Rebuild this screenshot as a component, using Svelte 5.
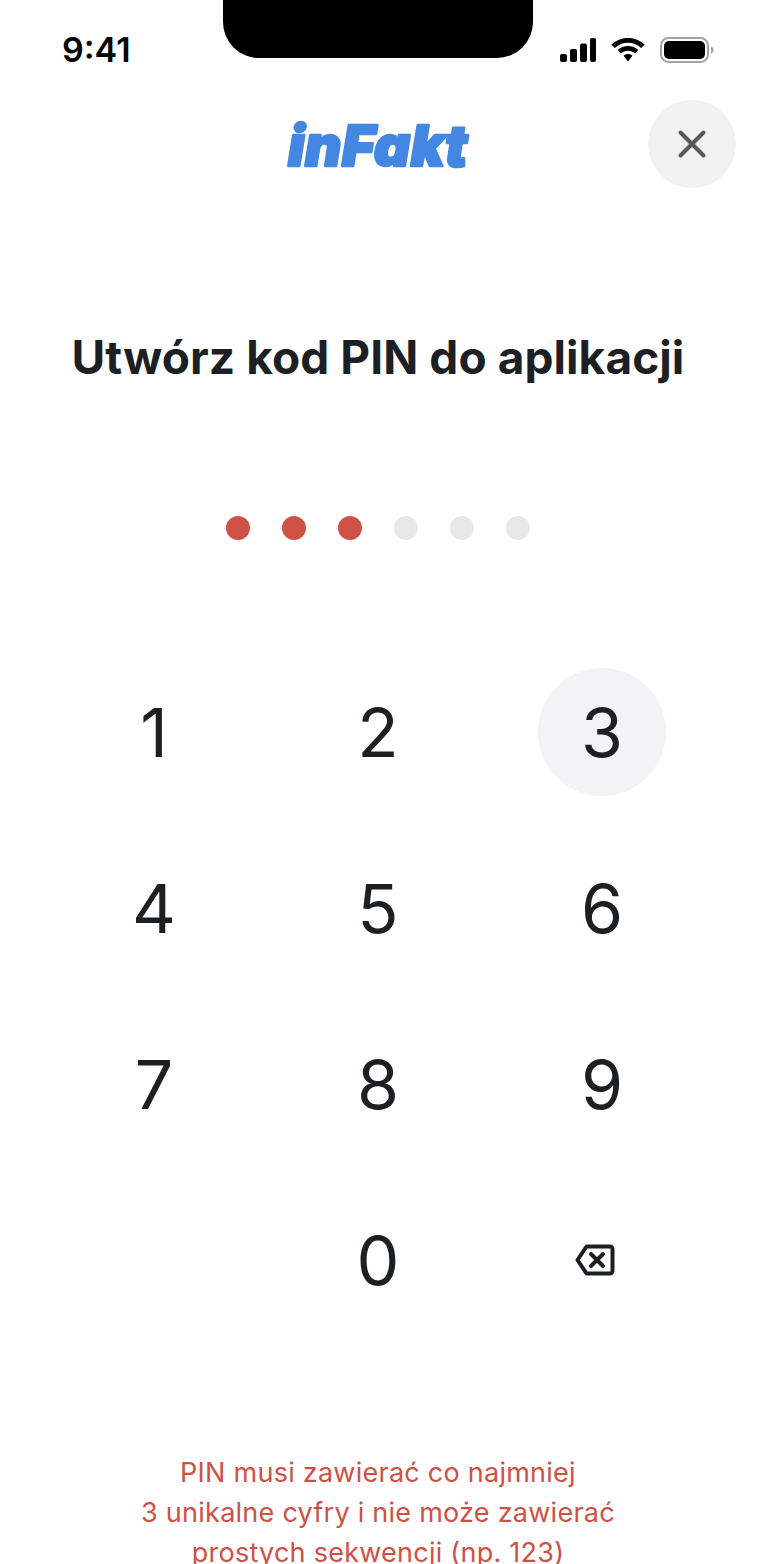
<script>
  const keys = ["1", "2", "3", "4", "5", "6", "7", "8", "9", "", "0", "back"];
  const dots = [true, true, true, false, false, false];
  let pressed = "3";
</script>

<div class="screen">
  <div class="status">
    <span class="time">9:41</span>
    <div class="notch"></div>
    <div class="status-icons">
      <svg class="signal" width="36" height="24" viewBox="0 0 36 24">
        <rect x="0" y="16" width="7" height="8" rx="2" />
        <rect x="10" y="11" width="7" height="13" rx="2" />
        <rect x="20" y="5.500" width="7" height="18.500" rx="2" />
        <rect x="30" y="0" width="6" height="24" rx="2" />
      </svg>
      <svg class="wifi" width="34" height="24" viewBox="0 0 34 24">
        <path d="M17 0C10.500 0 5 2.500 0.500 6.500L3.800 10C7.500 6.700 12 4.800 17 4.800S26.500 6.700 30.200 10L33.500 6.500C29 2.500 23.500 0 17 0Z" />
        <path d="M17 8C13 8 9.500 9.500 6.700 12L10 15.500C12 13.800 14.400 12.800 17 12.800S22 13.800 24 15.500L27.300 12C24.500 9.500 21 8 17 8Z" />
        <path d="M17 16C15.300 16 13.800 16.600 12.600 17.700L17 23.500L21.400 17.700C20.200 16.600 18.700 16 17 16Z" />
      </svg>
      <svg class="battery" width="54" height="26" viewBox="0 0 54 26">
        <rect x="1" y="1" width="47" height="24" rx="7.500" fill="none" stroke="#a3a3a3" stroke-width="2" />
        <rect x="4" y="4" width="41" height="18" rx="5" />
        <path d="M51 9.500C52.500 10 53.500 11.300 53.500 13S52.500 16 51 16.500Z" fill="#a3a3a3" />
      </svg>
    </div>
  </div>

  <header>
    <svg class="logo" width="200" height="88" viewBox="0 0 200 88">
      <text x="100" y="66" text-anchor="middle">inFakt</text>
    </svg>
    <button class="close" aria-label="Zamknij">
      <svg width="32" height="32" viewBox="0 0 32 32">
        <path d="M4.500 4.500L27.500 27.500M27.500 4.500L4.500 27.500" />
      </svg>
    </button>
  </header>

  <h1>Utwórz kod PIN do aplikacji</h1>

  <div class="dots">
    {#each dots as on}
      <span class="dot" class:on></span>
    {/each}
  </div>

  <div class="keypad">
    {#each keys as k}
      <div class="cell">
        {#if k === "back"}
          <button class="key backspace" aria-label="Usuń">
            <svg width="40" height="32" viewBox="0 0 40 32">
              <path class="outline" d="M11.500 2.500H35A2.500 2.500 0 0 1 37.500 5V27A2.500 2.500 0 0 1 35 29.500H11.500L2.500 16Z" />
              <path class="outline" d="M16 10L28 22M28 10L16 22" />
            </svg>
          </button>
        {:else if k}
          <button class="key" class:pressed={k === pressed}>{k}</button>
        {/if}
      </div>
    {/each}
  </div>

  <p class="hint">
    PIN musi zawierać co najmniej<br />
    3 unikalne cyfry i nie może zawierać<br />
    prostych sekwencji (np. 123)
  </p>
</div>

<style>
  :global(body) {
    margin: 0;
    background: #fff;
  }

  .screen {
    width: 756px;
    height: 1564px;
    padding-right: 4px;
    overflow: hidden;
    font-family: Inter, "Noto Sans", sans-serif;
    color: #1c1f23;
    background: #fff;
  }

  .status {
    height: 100px;
    display: flex;
    justify-content: space-between;
    padding: 0 42px 0 62px;
    box-sizing: border-box;
    position: relative;
  }

  .time {
    margin-top: 29px;
    font-family: Inter, sans-serif;
    font-size: 34px;
    line-height: 42px;
    font-weight: 600;
    color: #000;
  }

  .notch {
    position: absolute;
    left: 223px;
    top: 0;
    width: 310px;
    height: 58px;
    background: #000;
    border-radius: 0 0 36px 36px;
  }

  .status-icons {
    display: flex;
    align-items: center;
    gap: 15px;
    height: 26px;
    margin-top: 37px;
  }

  .status-icons svg {
    fill: #000;
  }

  header {
    height: 88px;
    display: flex;
    justify-content: center;
    align-items: center;
    position: relative;
  }

  .logo text {
    font-family: Inter, sans-serif;
    font-size: 56px;
    font-weight: 900;
    font-style: italic;
    letter-spacing: 0.5px;
    fill: #4487e2;
    stroke: #4487e2;
    stroke-width: 2.500;
    stroke-linejoin: round;
  }

  .close {
    position: absolute;
    right: 20px;
    top: 0;
    width: 88px;
    height: 88px;
    border: none;
    border-radius: 50%;
    background: #f0f2f2;
    display: flex;
    align-items: center;
    justify-content: center;
    padding: 0;
  }

  .close path {
    fill: none;
    stroke: #55585b;
    stroke-width: 4;
    stroke-linecap: round;
  }

  h1 {
    margin: 140px 0 0;
    font-size: 46px;
    line-height: 58px;
    font-weight: 700;
    letter-spacing: 0.080px;
    text-align: center;
  }

  .dots {
    display: flex;
    justify-content: center;
    gap: 32px;
    margin-top: 130px;
  }

  .dot {
    width: 24px;
    height: 24px;
    border-radius: 50%;
    background: #e6e7e8;
  }

  .dot.on {
    background: #cf5146;
  }

  .keypad {
    display: grid;
    grid-template-columns: repeat(3, 224px);
    grid-auto-rows: 176px;
    justify-content: center;
    margin-top: 104px;
  }

  .cell {
    display: flex;
    align-items: center;
    justify-content: center;
  }

  .key {
    width: 128px;
    height: 128px;
    border: none;
    border-radius: 50%;
    background: none;
    padding: 0;
    font-family: inherit;
    font-size: 68px;
    font-weight: 400;
    color: #1c1f23;
    display: flex;
    align-items: center;
    justify-content: center;
  }

  .key.pressed {
    background: #f2f3f5;
  }

  .backspace svg {
    margin-right: 14px;
  }

  .outline {
    fill: none;
    stroke: #1c1f23;
    stroke-width: 4;
    stroke-linejoin: round;
    stroke-linecap: round;
  }

  .hint {
    margin: 105px 0 0;
    font-size: 27px;
    line-height: 40px;
    letter-spacing: 0.250px;
    text-align: center;
    color: #cf5146;
  }
</style>
